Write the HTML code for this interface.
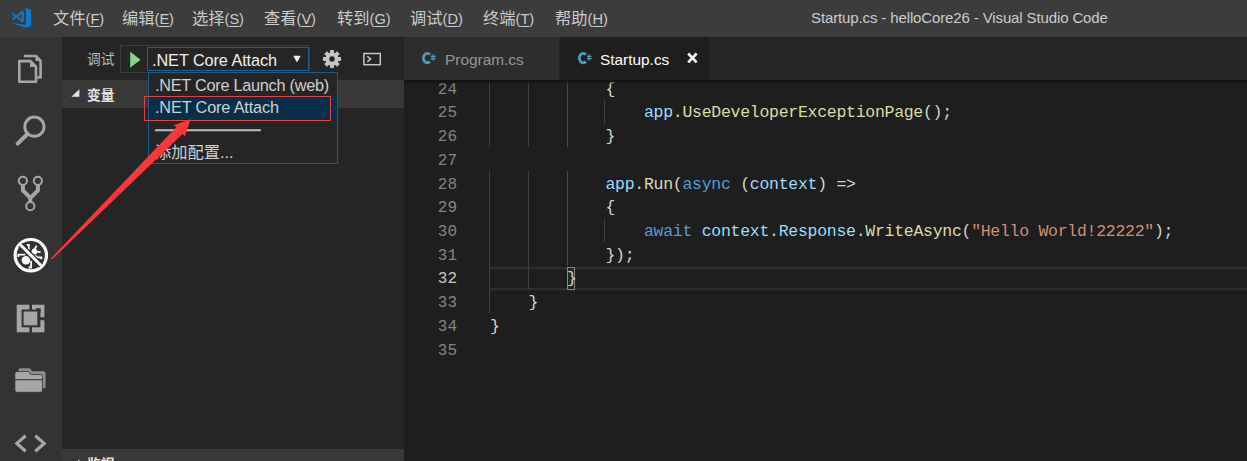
<!DOCTYPE html>
<html lang="zh-CN">
<head>
<meta charset="utf-8">
<title>Startup.cs - helloCore26 - Visual Studio Code</title>
<style>
*{box-sizing:border-box;margin:0;padding:0}
html,body{width:1247px;height:461px;overflow:hidden;background:#1e1e1e}
body{position:relative;font-family:"Liberation Sans","Noto Sans CJK SC",sans-serif;color:#ccc}
.abs{position:absolute}
#titlebar{left:0;top:0;width:1247px;height:37px;background:#3c3c3c}
.menu{top:0;height:37px;line-height:37px;font-size:16.25px;color:#cccccc;white-space:nowrap}
.menu .la{font-size:14.6px}
.menu u{text-decoration:underline;text-underline-offset:2px;text-decoration-thickness:1px}
#wtitle{top:0;height:37px;line-height:36px;font-size:15px;letter-spacing:-0.125px;color:#cccccc;white-space:nowrap}
#activity{left:0;top:37px;width:62px;height:424px;background:#333333}
#sidebar{left:62px;top:37px;width:342px;height:424px;background:#252526}
#tabs{left:404px;top:37px;width:843px;height:44px;background:#252526}
.tab{top:0;height:43px;line-height:45px;font-size:15.4px;white-space:nowrap}
#editor{left:404px;top:80px;width:843px;height:381px;background:#1e1e1e}
.ln{left:0;width:53px;text-align:right;color:#858585;font-family:"Liberation Mono",monospace;font-size:16px;height:24px;line-height:28px}
.cl{left:86px;color:#d4d4d4;font-family:"Liberation Mono",monospace;font-size:16.5px;letter-spacing:-0.28px;height:24px;line-height:28px;white-space:pre}
.v{color:#9cdcfe}.f{color:#dcdcaa}.k{color:#569cd6}.s{color:#ce9178}
.guide{width:1px;background:#404040}
#editor{overflow:hidden}
#shadow{left:0;top:0;width:843px;height:5px;background:linear-gradient(#121212,rgba(30,30,30,0))}
.ln.cur{color:#c6c6c6}
.ic{fill:none;stroke:#a6a6a6}
#sbhead{left:0;top:43px;width:342px;height:28px;background:#383838}
#sbhead2{left:0;top:412px;width:342px;height:12px;background:#383838;overflow:hidden}
.sect{font-size:13.75px;font-weight:bold;color:#e2e2e2;white-space:nowrap;line-height:31px;height:31px}
#dd{left:148px;top:72px;width:190px;height:92px;background:#252526;border:1px solid #1c5a8a}
.ddi{left:6px;font-size:16.25px;color:#d0d0d0;white-space:nowrap;height:23px;line-height:23px}

</style>
</head>
<body>
<div id="titlebar" class="abs"></div>
<div class="abs menu" style="left:53px">文件<span class="la">(<u>F</u>)</span></div>
<div class="abs menu" style="left:122px">编辑<span class="la">(<u>E</u>)</span></div>
<div class="abs menu" style="left:192px">选择<span class="la">(<u>S</u>)</span></div>
<div class="abs menu" style="left:264px">查看<span class="la">(<u>V</u>)</span></div>
<div class="abs menu" style="left:337px">转到<span class="la">(<u>G</u>)</span></div>
<div class="abs menu" style="left:410px">调试<span class="la">(<u>D</u>)</span></div>
<div class="abs menu" style="left:483px">终端<span class="la">(<u>T</u>)</span></div>
<div class="abs menu" style="left:555px">帮助<span class="la">(<u>H</u>)</span></div>
<svg class="abs" style="left:10px;top:6px" width="24" height="24" viewBox="10 6 24 24"><g fill="#0a7ad0">
<path d="M25.900 7.800L31.100 10.100V25.900L25.900 27.400Z"/>
<path d="M11.300 23.100L25.900 25V27.400L24.800 27.600Z"/>
<path fill-rule="evenodd" d="M15.300 16.500L21.300 11L23.900 11.300V21.700L21.300 22Z M18.300 16.500L21.500 13.700V19.400Z"/>
<path d="M12.600 13.400L16.800 17.100M12.600 19.400L16.800 15.900" stroke="#0a7ad0" stroke-width="1.900" fill="none"/>
</g></svg>
<div id="wtitle" class="abs" style="left:811px">Startup.cs - helloCore26 - Visual Studio Code</div>

<div id="activity" class="abs">
<svg class="abs" style="left:0;top:0" width="62" height="424" viewBox="0 37 62 424">
<!-- files -->
<g fill="none" stroke="#a6a6a6" stroke-width="2.6" stroke-linejoin="round">
<path d="M23.800 56h12.200l4.600 4.800v16.600h-3.200"/>
<path d="M19.3 61.1h11.2l5.5 5.6v15h-16.7z"/>
</g>
<path d="M30 61v6h6z M35.6 55.5l5.2 5.4h-5.2z" fill="#a6a6a6"/>
<!-- search -->
<circle cx="34.4" cy="126.7" r="9.6" fill="none" stroke="#a6a6a6" stroke-width="3"/>
<path d="M27.2 134.2L17.6 143.6" stroke="#a6a6a6" stroke-width="4" stroke-linecap="round"/>
<!-- git -->
<g fill="none" stroke="#a6a6a6">
<path d="M22.9 185v5.5l7.4 7.4v4.5M37.9 185v5.5l-7.4 7.4" stroke-width="4"/>
<circle cx="22.9" cy="180.8" r="4.1" stroke-width="2"/>
<circle cx="37.9" cy="180.8" r="4.1" stroke-width="2"/>
<circle cx="30.3" cy="206.2" r="4.1" stroke-width="2"/>
</g>
<!-- debug -->
<g>
<circle cx="30.8" cy="255.2" r="15.7" fill="none" stroke="#fff" stroke-width="3.2"/>
<circle cx="25.900" cy="260.300" r="4.300" fill="#fff"/>
<circle cx="34.500" cy="251.500" r="2.900" fill="#fff"/>
<path d="M18.4 257v-2.300h7M31.100 261v6.500h-2.600M26.800 244.800h2v5M36.600 245.600l-2.200 4M36 251.800h4.600M35 255.500l2 1.800h4.300v2" fill="none" stroke="#fff" stroke-width="1.800"/>
<path d="M20.400 244.800L41.200 265.600" stroke="#333" stroke-width="5.600"/>
<path d="M19.800 244.200L41.800 266.200" stroke="#fff" stroke-width="3"/>
</g>
<!-- extensions -->
<g>
<rect x="16.7" y="304.7" width="27.7" height="27.6" fill="#a6a6a6"/>
<rect x="29.4" y="304" width="2.6" height="30" fill="#333"/>
<rect x="38" y="317.3" width="7" height="2.9" fill="#333"/>
<rect x="21.6" y="309.5" width="18.8" height="17.8" fill="#333"/>
<rect x="36" y="308.2" width="4.6" height="5" fill="#333"/>
<rect x="23.6" y="311.5" width="13.7" height="13.8" fill="#a6a6a6"/>
</g>
<!-- folder -->
<g>
<path d="M18.4 370.2a2 2 0 0 1 2-2h9.5l2.2 3h11.4a2 2 0 0 1 2 2v13.6a1.5 1.5 0 0 1-1.5 1.5h-25.600z" fill="#8f8f8f"/>
<path d="M14.900 373.5a2 2 0 0 1 2-2h11.800l2.200 3h9.600a2 2 0 0 1 2 2v13.800a2 2 0 0 1-2 2h-23.600a2 2 0 0 1-2-2z" fill="#a6a6a6" stroke="#333" stroke-width="0.8"/>
<path d="M14.900 379.700h27.600" stroke="#333" stroke-width="1"/>
</g>
<!-- code -->
<path d="M25.700 435.700L16.800 443.400L25.700 451.300M35.300 435.700L44.200 443.400L35.300 451.300" fill="none" stroke="#a6a6a6" stroke-width="3.200"/>
</svg>
</div>
<div id="sidebar" class="abs">
<div id="dbg" class="abs" style="left:25px;top:12px;font-size:13.75px;line-height:22px;color:#bbbbbb;white-space:nowrap">调试</div>
<div class="abs" style="left:58px;top:8px;width:190px;height:28px;border:1px solid #3c3c3c"></div>
<svg class="abs" style="left:65px;top:13px" width="16" height="18" viewBox="127 50 16 18"><path d="M130.2 51.8L140.6 59.8L130.2 67.8Z" fill="#89d185"/></svg>
<div class="abs" style="left:85px;top:10px;width:162px;height:24px;border:1px solid #1c5f92;background:#252526"></div>
<div id="seltxt" class="abs" style="left:90px;top:11px;font-size:16.25px;line-height:24px;color:#f0f0f0;white-space:nowrap;letter-spacing:-0.07px">.NET Core Attach</div>
<svg class="abs" style="left:231px;top:18px" width="8" height="8" viewBox="0 0 8 8"><path d="M0.3 0.8h7.4L4 7.6Z" fill="#f0f0f0"/></svg>
<svg class="abs" style="left:260px;top:12px" width="20" height="20" viewBox="-10 -10 20 20"><g fill="#c5c5c5"><circle r="6.6"/><g id="teeth"><rect x="-2" y="-9.1" width="4" height="18.2" rx="0.8"/><rect x="-2" y="-9.1" width="4" height="18.2" rx="0.8" transform="rotate(45)"/><rect x="-2" y="-9.1" width="4" height="18.2" rx="0.8" transform="rotate(90)"/><rect x="-2" y="-9.1" width="4" height="18.2" rx="0.8" transform="rotate(135)"/></g></g><circle r="2.7" fill="#252526"/></svg>
<svg class="abs" style="left:300px;top:14px" width="20" height="16" viewBox="0 0 20 16"><rect x="1.9" y="2.5" width="16.4" height="11.2" fill="none" stroke="#c5c5c5" stroke-width="1.5"/><path d="M5.3 5.3L8.6 8.1L5.3 10.9" fill="none" stroke="#c5c5c5" stroke-width="1.5"/></svg>
<div id="sbhead" class="abs"></div>
<svg class="abs" style="left:9px;top:52px" width="9" height="8" viewBox="0 0 9 8"><path d="M8.4 0.3V7.8H0.3Z" fill="#e2e2e2"/></svg>
<div class="abs sect" style="left:25px;top:43px">变量</div>
<div id="sbhead2" class="abs"><svg class="abs" style="left:9px;top:9.500px" width="9" height="8" viewBox="0 0 9 8"><path d="M8.4 0.3V7.8H0.3Z" fill="#e2e2e2"/></svg><div class="abs sect" style="left:25px;top:0">监视</div></div>
<div id="dd" class="abs" style="left:86px;top:35px">
<div class="abs" style="left:0;top:22px;width:188px;height:24px;background:#062f4a"></div>
<div class="abs ddi" style="top:1px;letter-spacing:-0.25px">.NET Core Launch (web)</div>
<div class="abs ddi" style="top:23px;letter-spacing:-0.14px">.NET Core Attach</div>
<div class="abs ddi" style="top:45.500px;font-size:21.9px;color:#b8b8b8;font-family:'DejaVu Sans Mono',monospace">────────</div>
<div class="abs ddi" style="top:68px">添加配置...</div>
</div>
</div>
<div class="abs" style="left:144px;top:96px;width:187px;height:25px;border:1px solid #e84040"></div>
<svg class="abs" style="left:0;top:0;pointer-events:none" width="1247" height="461" viewBox="0 0 1247 461"><path d="M190.600 119.300L173.700 125.300L176.400 127.100L50.800 258.500L51.900 259.600L182.700 133.700L184.900 136.400Z" fill="#f83838"/></svg>
<div id="tabs" class="abs">
<div class="abs tab" style="left:0;width:155px;background:#2d2d2d"></div>
<div class="abs tab" style="left:156px;width:149px;height:44px;background:#1e1e1e"></div>
<svg class="abs" style="left:17px;top:14px" width="16" height="14" viewBox="0 0 16 14"><path d="M8.900 3.600A3.900 4.700 0 1 0 8.900 10.600" fill="none" stroke="#519aba" stroke-width="2.900"/><path d="M11.200 3.300v6.400M12.800 3.300v6.400" stroke="#519aba" stroke-width="0.800" fill="none"/><path d="M9.900 5.400h4.700M9.900 7.700h4.700" stroke="#519aba" stroke-width="1.200" fill="none"/></svg>
<div class="abs tab" style="left:41px;color:#969696">Program.cs</div>
<svg class="abs" style="left:173px;top:14px" width="16" height="14" viewBox="0 0 16 14"><path d="M8.900 3.600A3.900 4.700 0 1 0 8.900 10.600" fill="none" stroke="#519aba" stroke-width="2.900"/><path d="M11.200 3.300v6.400M12.800 3.300v6.400" stroke="#519aba" stroke-width="0.800" fill="none"/><path d="M9.900 5.400h4.700M9.900 7.700h4.700" stroke="#519aba" stroke-width="1.200" fill="none"/></svg>
<div class="abs tab" style="left:196px;color:#ffffff">Startup.cs</div>
<svg class="abs" style="left:283px;top:15px" width="11" height="12" viewBox="0 0 11 12"><path d="M1.2 1.5L9.6 10.3M9.6 1.5L1.2 10.3" stroke="#fff" stroke-width="2.6" fill="none"/></svg>
</div>
<div id="editor" class="abs">
<div class="abs" style="left:86px;top:187px;width:800px;height:23px;border:2px solid #2d2d2d;border-left:0;box-shadow:inset 0 1px 0 #242424,0 1px 0 #222"></div>
<div class="abs guide" style="left:85px;top:-3.90px;height:71.25px;background:#404040"></div>
<div class="abs guide" style="left:85px;top:91.10px;height:142.50px;background:#404040"></div>
<div class="abs guide" style="left:124px;top:-3.90px;height:71.25px;background:#404040"></div>
<div class="abs guide" style="left:124px;top:91.10px;height:118.75px;background:#404040"></div>
<div class="abs guide" style="left:163px;top:-3.90px;height:71.25px;background:#6a3a3a"></div>
<div class="abs guide" style="left:163px;top:91.10px;height:95.00px;background:#6a3a3a"></div>
<div class="abs guide" style="left:200px;top:19.85px;height:23.75px;background:#404040"></div>
<div class="abs guide" style="left:200px;top:138.60px;height:23.75px;background:#404040"></div>
<div class="abs" style="left:163px;top:187px;width:8px;height:23px;border:1px solid #888;background:#1c2a1c"></div>
<div class="abs ln" style="top:-3.90px">24</div>
<div class="abs cl" style="top:-3.90px">            {</div>
<div class="abs ln" style="top:19px">25</div>
<div class="abs cl" style="top:19px">                <span class="v">app</span>.<span class="f">UseDeveloperExceptionPage</span>();</div>
<div class="abs ln" style="top:43px">26</div>
<div class="abs cl" style="top:43px">            }</div>
<div class="abs ln" style="top:67px">27</div>
<div class="abs ln" style="top:91px">28</div>
<div class="abs cl" style="top:91px">            <span class="v">app</span>.<span class="f">Run</span>(<span class="k">async</span> (<span class="v">context</span>) =&gt;</div>
<div class="abs ln" style="top:114px">29</div>
<div class="abs cl" style="top:114px">            {</div>
<div class="abs ln" style="top:138px">30</div>
<div class="abs cl" style="top:138px">                <span class="k">await</span> <span class="v">context</span>.<span class="v">Response</span>.<span class="f">WriteAsync</span>(<span class="s">"Hello World!22222"</span>);</div>
<div class="abs ln" style="top:162px">31</div>
<div class="abs cl" style="top:162px">            });</div>
<div class="abs ln cur" style="top:185px">32</div>
<div class="abs cl" style="top:185px">        }</div>
<div class="abs ln" style="top:209px">33</div>
<div class="abs cl" style="top:209px">    }</div>
<div class="abs ln" style="top:233px">34</div>
<div class="abs cl" style="top:233px">}</div>
<div class="abs ln" style="top:257px">35</div>
<div id="shadow" class="abs"></div>
</div>
</body>
</html>
